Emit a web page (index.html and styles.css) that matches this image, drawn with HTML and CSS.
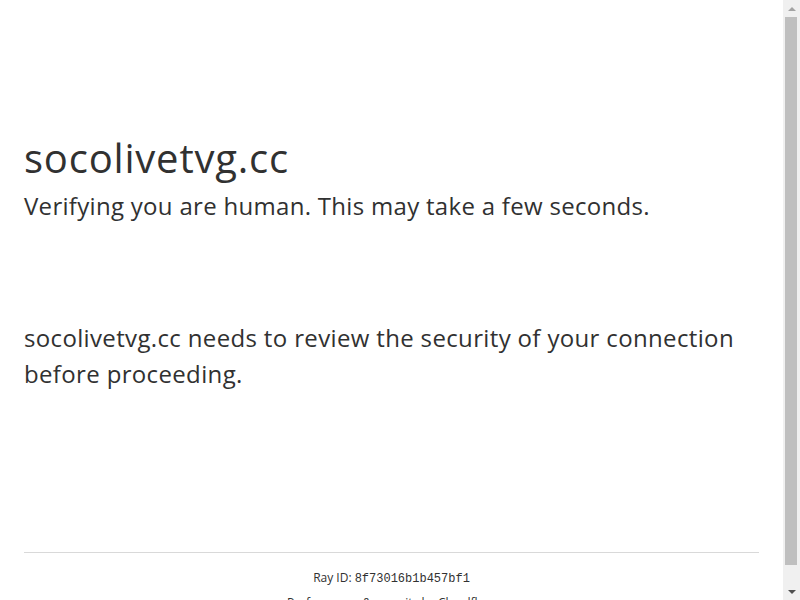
FILE: index.html
```html
<!DOCTYPE html>
<html lang="en-US">
<head>
    <meta charset="UTF-8">
    <title>Just a moment...</title>
    <link rel="stylesheet" href="styles.css">
</head>
<body>
    <div class="main-wrapper">
        <div class="main-content">
            <h1 class="zone-name">socolivetvg.cc</h1>
            <h2 class="h2">Verifying you are human. This may take a few seconds.</h2>
            <div class="challenge-stage"></div>
            <p class="core-msg">socolivetvg.cc needs to review the security of your connection before proceeding.</p>
        </div>
        <div class="footer">
            <div class="footer-inner">
                <div class="ray-id">Ray ID: <code>8f73016b1b457bf1</code></div>
                <div class="text-center">Performance &amp; security by <a href="#" class="cf-link">Cloudflare</a></div>
            </div>
        </div>
    </div>

    <!-- barra de desplazamiento -->
    <div class="scrollbar" aria-hidden="true">
        <div class="sb-button"><span class="arrow-up"></span></div>
        <div class="sb-track">
            <div class="sb-thumb"></div>
        </div>
        <div class="sb-button"><span class="arrow-down"></span></div>
    </div>
</body>
</html>
```

FILE: styles.css
```css
/* Estilos generales */
html, body {
    margin: 0;
    padding: 0;
}

body {
    font-family: "Open Sans", "Noto Sans", sans-serif;
    color: #313131;
    background-color: #fff;
    padding-right: 17px;
}

.main-wrapper {
    display: flex;
    flex-direction: column;
}

.main-content {
    width: 100%;
    max-width: 60rem;
    margin: 8rem auto 10rem;
    padding: 0 1.5rem;
    box-sizing: border-box;
}

.zone-name {
    margin: 0;
    font-size: 2.5rem;
    line-height: 3.75rem;
    font-weight: 400;
    letter-spacing: 0.8px;
}

.h2 {
    margin: 0;
    font-size: 1.5rem;
    line-height: 2.25rem;
    font-weight: 400;
    letter-spacing: 0.3px;
}

.challenge-stage {
    height: 6rem;
}

.core-msg {
    margin: 0;
    font-size: 1.5rem;
    line-height: 2.25rem;
    letter-spacing: 0.35px;
}

.footer {
    width: 100%;
    max-width: 60rem;
    margin: 0 auto;
    padding: 0 1.5rem 0.5rem;
    box-sizing: border-box;
    font-size: 0.75rem;
    line-height: 1.125rem;
}

.footer-inner {
    border-top: 1px solid #d9d9d9;
    padding-top: 1rem;
    text-align: center;
}

.ray-id {
    margin-bottom: 6px;
}

.ray-id code {
    font-family: "Liberation Mono", monospace;
    font-size: 0.75rem;
}

.cf-link {
    color: #313131;
    text-decoration: none;
}

/* Barra de desplazamiento */
.scrollbar {
    position: fixed;
    top: 0;
    right: 0;
    width: 17px;
    height: 100vh;
    background-color: #f0f0f0;
    display: flex;
    flex-direction: column;
}

.sb-button {
    height: 17px;
    display: flex;
    align-items: center;
    justify-content: center;
}

.sb-track {
    flex: 1;
    padding: 0 3px 0 2px;
}

.sb-thumb {
    height: 548px;
    background-color: #bfbfbf;
}

.arrow-up,
.arrow-down {
    width: 0;
    height: 0;
    border-left: 4px solid transparent;
    border-right: 4px solid transparent;
}

.arrow-up {
    border-bottom: 4px solid #a3a3a3;
}

.arrow-down {
    border-top: 4px solid #505050;
}
```
